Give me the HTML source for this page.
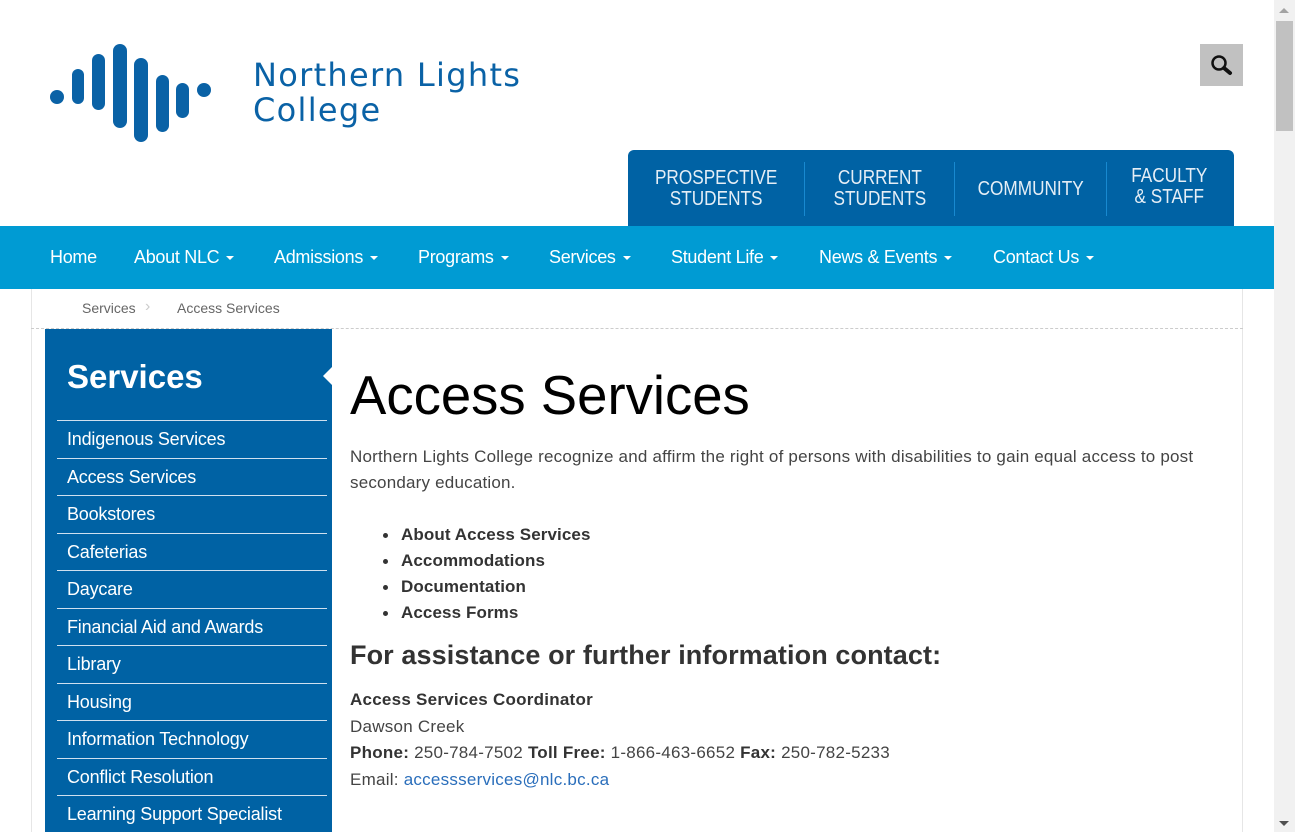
<!DOCTYPE html>
<html><head><meta charset="utf-8"><style>
*{margin:0;padding:0;box-sizing:border-box}
html,body{width:1295px;height:832px;overflow:hidden}
body{background:#fff;font-family:"Liberation Sans",Arial,sans-serif;position:relative}
.sb{position:absolute;left:1274px;top:0;width:21px;height:832px;background:#f1f1f1}
.sb .th{position:absolute;left:2px;top:21px;width:17px;height:110px;background:#c1c1c1}
.sb .up{position:absolute;left:5px;top:8px;border:5px solid transparent;border-bottom-color:#a3a3a3;border-top:0}
.sb .dn{position:absolute;left:5px;bottom:6px;border:5px solid transparent;border-top-color:#505050;border-bottom:0}
.logo{position:absolute;left:40px;top:30px}
.lt{position:absolute;left:253px;top:58px;color:#0a62a6;font-family:"DejaVu Sans",sans-serif;font-size:32px;line-height:35px;letter-spacing:1.3px}
.search{position:absolute;left:1200px;top:44px;width:43px;height:42px;background:#c1c1c1}
.tabs{position:absolute;left:628px;top:150px;width:606px;height:76px;background:#0062a4;border-radius:6px 6px 0 0;display:flex;padding-top:12px}
.tabs div{color:#e5eef6;font-size:20px;line-height:21px;text-align:center;display:flex;align-items:center;justify-content:center;border-right:1px solid #1889d0;height:54px}
.tabs div span{display:inline-block;transform:scaleX(0.86)}
.nav{position:absolute;left:0;top:226px;width:1274px;height:63px;background:#009bd3}
.nav span{position:absolute;top:21px;color:#fff;font-size:18px;letter-spacing:-0.3px}
.nav span i{display:inline-block;border:4.5px solid transparent;border-top:4.5px solid #fff;border-bottom:0;margin-left:7px;vertical-align:3px}
.wrap{position:absolute;left:31px;top:289px;width:1212px;height:560px;border-left:1px solid #e6e6e6;border-right:1px solid #e6e6e6}
.bc{position:absolute;left:31px;top:289px;width:1212px;height:40px;border-bottom:1px dashed #ccc;font-size:14px;color:#666}
.side{position:absolute;left:45px;top:329px;width:287px;height:510px;background:#0062a4}
.side h2{color:#fff;font-size:33px;position:absolute;left:22px;top:29px}
.side .notch{position:absolute;right:0;top:38px;border:9px solid transparent;border-right:9px solid #fff;border-left:0}
.side ul{list-style:none;position:absolute;left:12px;top:91px;width:270px}
.side li{border-top:1px solid #cfe0ef;height:37.5px;color:#fff;font-size:18px;padding:8px 0 0 10px;letter-spacing:-0.2px}
h1{position:absolute;left:350px;top:364px;font-size:54.5px;font-weight:normal;color:#000;white-space:nowrap}
.p{position:absolute;left:350px;top:444px;width:880px;font-size:17px;line-height:26px;color:#444;letter-spacing:0.2px}
.ul{position:absolute;left:401px;top:522px;font-size:17px;line-height:26px;font-weight:bold;color:#333;letter-spacing:0.1px}
.ul div{position:relative}
.ul div:before{content:"";position:absolute;left:-18px;top:11px;width:5px;height:5px;border-radius:50%;background:#333}
h3{position:absolute;left:350px;top:640px;font-size:27px;color:#333;white-space:nowrap;letter-spacing:0.1px}
.c{position:absolute;left:350px;top:687px;font-size:17px;line-height:26.5px;color:#444;white-space:nowrap;letter-spacing:0.25px}
.c b{color:#333}
a{color:#2a6ebb;text-decoration:none}
</style></head><body>
<div class="logo"><svg width="180" height="120" viewBox="40 30 180 120" fill="#0a62a6">
<circle cx="57" cy="97" r="7"/>
<rect x="72" y="69" width="12" height="35" rx="6"/>
<rect x="92" y="54" width="13" height="56" rx="6.5"/>
<rect x="113" y="44" width="14" height="84" rx="7"/>
<rect x="134" y="58" width="14" height="84" rx="7"/>
<rect x="156" y="75" width="13" height="57" rx="6.5"/>
<rect x="176" y="83" width="13" height="35" rx="6.5"/>
<circle cx="204" cy="90" r="7"/>
</svg></div>
<div class="lt">Northern Lights<br>College</div>
<div class="search"><svg width="43" height="42"><circle cx="19" cy="19" r="6.5" fill="none" stroke="#111" stroke-width="2.5"/><line x1="24" y1="24" x2="30" y2="29" stroke="#111" stroke-width="4" stroke-linecap="round"/></svg></div>
<div class="tabs">
<div style="width:177px"><span>PROSPECTIVE<br>STUDENTS</span></div>
<div style="width:150px"><span>CURRENT<br>STUDENTS</span></div>
<div style="width:152px"><span>COMMUNITY</span></div>
<div style="width:125px;border:0;padding-bottom:4px"><span>FACULTY<br>&amp; STAFF</span></div>
</div>
<div class="nav">
<span style="left:50px">Home</span>
<span style="left:134px">About NLC<i></i></span>
<span style="left:274px">Admissions<i></i></span>
<span style="left:418px">Programs<i></i></span>
<span style="left:549px">Services<i></i></span>
<span style="left:671px">Student Life<i></i></span>
<span style="left:819px">News &amp; Events<i></i></span>
<span style="left:993px">Contact Us<i></i></span>
</div>
<div class="wrap"></div>
<div class="bc"><span style="position:absolute;left:51px;top:11px">Services</span><span style="position:absolute;left:114px;top:9px;color:#ccc;font-size:16px">›</span><span style="position:absolute;left:146px;top:11px">Access Services</span></div>
<div class="side"><h2>Services</h2><div class="notch"></div>
<ul><li>Indigenous Services</li><li>Access Services</li><li>Bookstores</li><li>Cafeterias</li><li>Daycare</li><li>Financial Aid and Awards</li><li>Library</li><li>Housing</li><li>Information Technology</li><li>Conflict Resolution</li><li>Learning Support Specialist</li></ul></div>
<h1>Access Services</h1>
<div class="p">Northern Lights College recognize and affirm the right of persons with disabilities to gain equal access to post secondary education.</div>
<div class="ul"><div>About Access Services</div><div>Accommodations</div><div>Documentation</div><div>Access Forms</div></div>
<h3>For assistance or further information contact:</h3>
<div class="c"><b>Access Services Coordinator</b><br>Dawson Creek<br><b>Phone:</b> 250-784-7502 <b>Toll Free:</b> 1-866-463-6652 <b>Fax:</b> 250-782-5233<br>Email: <a>accessservices@nlc.bc.ca</a></div>
<div class="sb"><div class="up"></div><div class="th"></div><div class="dn"></div></div>
</body></html>
